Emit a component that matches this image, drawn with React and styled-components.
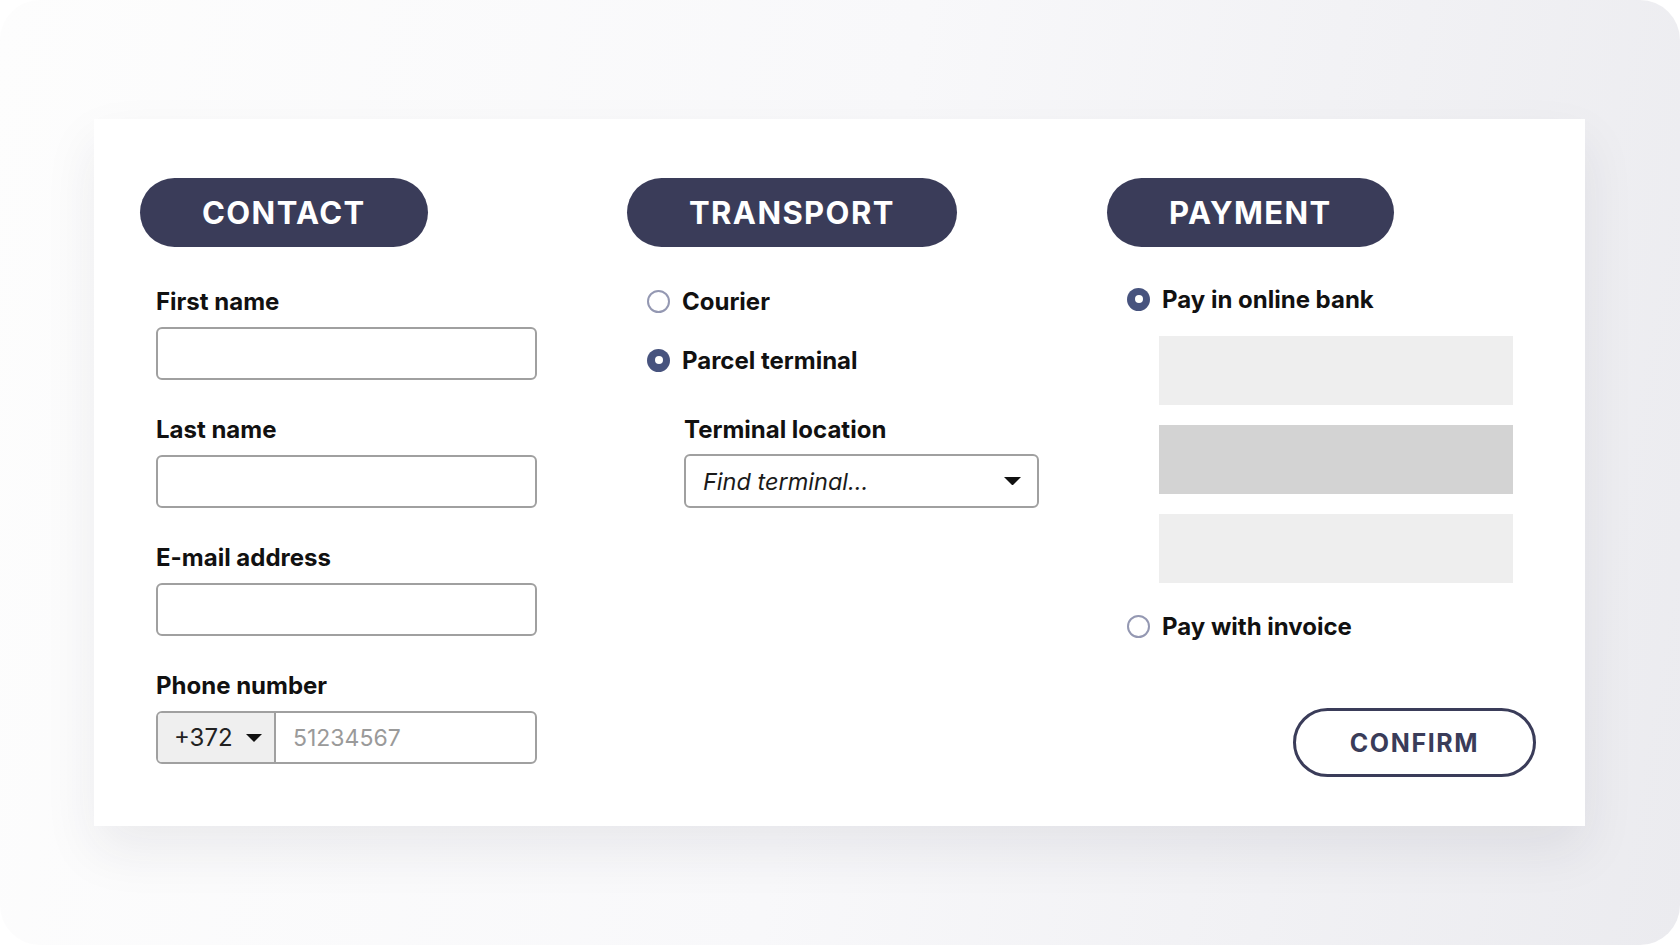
import React from 'react';
import styled, { createGlobalStyle } from 'styled-components';

const GlobalStyle = createGlobalStyle`
	html, body {
		margin: 0;
		padding: 0;
		background: #ffffff;
	}
	body {
		font-family: Inter, "Noto Sans", sans-serif;
		color: #111111;
	}
`;

const navy = '#3a3c59';
const radioBlue = '#47537e';

const Caret = ({ size = 16 }) => (
	<svg width={size} height={size / 2} viewBox="0 0 16 8">
		<path d="M0 0 L16 0 L8 8 Z" fill="#111" />
	</svg>
);

const App = () => (
	<>
		<GlobalStyle />
		<Frame>
			<Card>
				<Column>
					<Pill>CONTACT</Pill>
					<Fields>
						<Field>
							<Label>First name</Label>
							<Input />
						</Field>
						<Field>
							<Label>Last name</Label>
							<Input />
						</Field>
						<Field>
							<Label>E-mail address</Label>
							<Input />
						</Field>
						<Field>
							<Label>Phone number</Label>
							<PhoneBox>
								<Prefix>
									+372
									<Caret />
								</Prefix>
								<PhoneValue>51234567</PhoneValue>
							</PhoneBox>
						</Field>
					</Fields>
				</Column>

				<Column>
					<Pill>TRANSPORT</Pill>
					<Options $top={39}>
						<RadioRow>
							<Radio />
							Courier
						</RadioRow>
						<RadioRow>
							<Radio $checked />
							Parcel terminal
						</RadioRow>
					</Options>
					<Terminal>
						<Label>Terminal location</Label>
						<Select>
							<SelectText>Find terminal...</SelectText>
							<Caret size={17} />
						</Select>
					</Terminal>
				</Column>

				<Column>
					<Pill>PAYMENT</Pill>
					<Options $top={37}>
						<RadioRow>
							<Radio $checked />
							Pay in online bank
						</RadioRow>
					</Options>
					<Banks>
						<Bank />
						<Bank $dark />
						<Bank />
					</Banks>
					<Invoice>
						<Radio />
						Pay with invoice
					</Invoice>
					<Confirm>CONFIRM</Confirm>
				</Column>
			</Card>
		</Frame>
	</>
);

const Frame = styled.div`
	width: 1680px;
	height: 945px;
	box-sizing: border-box;
	border-radius: 40px;
	overflow: hidden;
	padding: 119px 0 0 94px;
	background: linear-gradient(100deg, #fdfdfd 0%, #f8f8fa 50%, #ebebef 100%);
`;

const Card = styled.div`
	width: 1491px;
	box-sizing: border-box;
	background: #ffffff;
	padding: 59px 49px 49px 46px;
	display: grid;
	grid-template-columns: 487px 480px 429px;
	box-shadow: 0 24px 50px rgba(40, 40, 70, 0.08);
`;

const Column = styled.div`
	display: flex;
	flex-direction: column;
	align-items: flex-start;
`;

const Pill = styled.div`
	height: 69px;
	padding: 0 62px;
	border-radius: 35px;
	background: ${navy};
	color: #ffffff;
	font-size: 31px;
	font-weight: 700;
	letter-spacing: 1.4px;
	display: flex;
	align-items: center;
	justify-content: center;
`;

const Fields = styled.div`
	margin-top: 40px;
	padding-left: 16px;
	display: flex;
	flex-direction: column;
	gap: 35px;
`;

const Field = styled.div`
	display: flex;
	flex-direction: column;
	gap: 10px;
`;

const Label = styled.span`
	font-size: 24px;
	font-weight: 700;
	line-height: 30px;
	color: #111;
`;

const Input = styled.div`
	width: 381px;
	height: 53px;
	box-sizing: border-box;
	border: 2px solid #a0a0a0;
	border-radius: 6px;
	background: #fff;
`;

const PhoneBox = styled(Input)`
	display: flex;
	overflow: hidden;
`;

const Prefix = styled.div`
	width: 118px;
	box-sizing: border-box;
	padding: 0 12px 0 16px;
	background: #efefef;
	border-right: 2px solid #a0a0a0;
	display: flex;
	align-items: center;
	justify-content: space-between;
	font-size: 24px;
	color: #222;
`;

const PhoneValue = styled.div`
	padding-left: 17px;
	display: flex;
	align-items: center;
	font-size: 23px;
	color: #9a9a9a;
`;

const Options = styled.div`
	margin-top: ${props => props.$top}px;
	padding-left: 20px;
	display: flex;
	flex-direction: column;
	gap: 29px;
`;

const RadioRow = styled.label`
	height: 30px;
	display: flex;
	align-items: center;
	gap: 12px;
	font-size: 24px;
	font-weight: 700;
	color: #111;
`;

const Radio = styled.span`
	width: 23px;
	height: 23px;
	box-sizing: border-box;
	border-radius: 50%;
	flex-shrink: 0;
	background: ${props => (props.$checked ? radioBlue : '#fff')};
	border: ${props => (props.$checked ? 'none' : '2px solid #9498b2')};
	position: relative;
	&::after {
		content: '';
		display: ${props => (props.$checked ? 'block' : 'none')};
		position: absolute;
		inset: 0;
		margin: auto;
		width: 8px;
		height: 8px;
		border-radius: 50%;
		background: #fff;
	}
`;

const Terminal = styled.div`
	margin-top: 40px;
	padding-left: 57px;
	display: flex;
	flex-direction: column;
	gap: 9px;
`;

const Select = styled.div`
	width: 355px;
	height: 54px;
	box-sizing: border-box;
	border: 2px solid #a0a0a0;
	border-radius: 6px;
	padding: 0 16px 0 17px;
	display: flex;
	align-items: center;
	justify-content: space-between;
`;

const SelectText = styled.span`
	font-size: 23.5px;
	font-style: italic;
	color: #1a1a1a;
`;

const Banks = styled.div`
	margin-top: 22px;
	padding-left: 52px;
	display: flex;
	flex-direction: column;
	gap: 20px;
`;

const Bank = styled.div`
	width: 354px;
	height: 69px;
	background: ${props => (props.$dark ? '#d3d3d3' : '#eeeeee')};
`;

const Invoice = styled(RadioRow)`
	margin-top: 28px;
	margin-left: 20px;
`;

const Confirm = styled.button`
	align-self: flex-end;
	margin-top: 67px;
	width: 243px;
	height: 69px;
	border: 3px solid ${navy};
	border-radius: 35px;
	background: #fff;
	color: ${navy};
	font-family: Inter, "Noto Sans", sans-serif;
	font-size: 25px;
	font-weight: 700;
	letter-spacing: 1.6px;
`;

export default App;
